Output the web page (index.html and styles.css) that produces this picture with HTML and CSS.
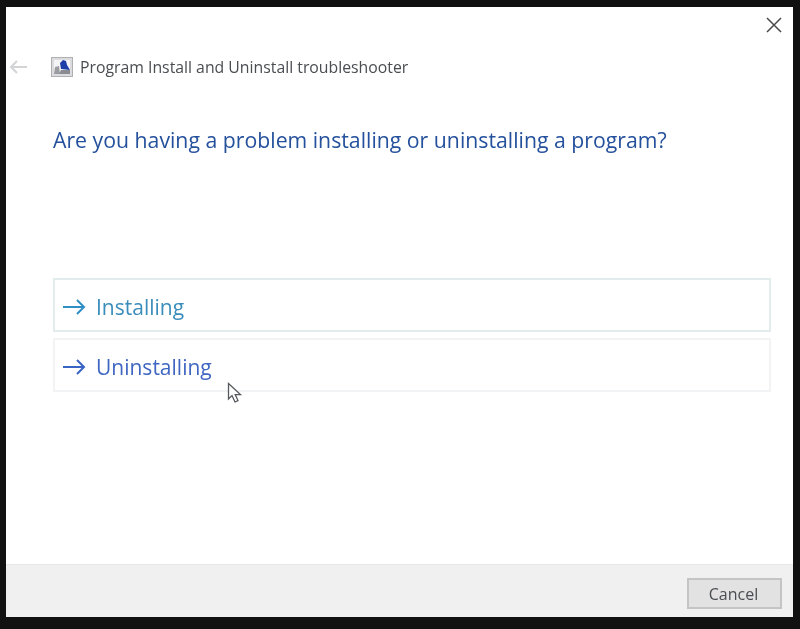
FILE: index.html
```html
<!DOCTYPE html>
<html>
<head>
  <link rel="stylesheet" href="styles.css">
</head>
<body>
  <div class="window">
    <div class="top-bar">
      <svg class="close-icon" width="16" height="16" viewBox="0 0 16 16">
        <path d="M1 1 L15 15 M15 1 L1 15" stroke="#4a4a4a" stroke-width="1.5" fill="none"/>
      </svg>
    </div>
    <div class="title-row">
      <svg class="back-icon" width="18" height="14" viewBox="0 0 18 14">
        <path d="M18 7 H2 M8 1 L2 7 L8 13" stroke="#d2d4d6" stroke-width="2" fill="none"/>
      </svg>
      <svg class="app-icon" width="22" height="20" viewBox="0 0 22 20">
        <rect x="0.5" y="0.5" width="21" height="19" fill="#dcdcde" stroke="#b0b0b2"/>
        <rect x="3" y="3" width="16" height="14" fill="#f4f4f6"/>
        <path d="M3 17 L4 10 L8 9 L9 17 Z" fill="#9a9ca2"/>
        <path d="M9 6 L12 3 L15 4 L16 8 L19 13 L10 12 Z" fill="#1f3fa8"/>
        <path d="M8 17 L10 13 L19 13 V17 Z" fill="#8a8c94"/>
      </svg>
      <span class="title-text">Program Install and Uninstall troubleshooter</span>
    </div>
    <h1 class="question">Are you having a problem installing or uninstalling a program?</h1>
    <div class="options">
      <div class="option option-first">
        <svg class="arrow" width="23" height="16" viewBox="0 0 23 16">
          <path d="M0 8 H21 M14 1 L21 8 L14 15" stroke="#2f8fc4" stroke-width="2" fill="none"/>
        </svg>
        <span class="option-label label-first">Installing</span>
      </div>
      <div class="option option-second">
        <svg class="arrow" width="23" height="16" viewBox="0 0 23 16">
          <path d="M0 8 H21 M14 1 L21 8 L14 15" stroke="#3a64c4" stroke-width="2" fill="none"/>
        </svg>
        <span class="option-label label-second">Uninstalling</span>
        <svg class="cursor" width="16" height="22" viewBox="0 0 16 22">
          <path d="M1.5 1.5 V17 L5 13.5 L8 20 L11 18.6 L8.2 12.6 H13.5 Z" fill="#fff" stroke="#55585c" stroke-width="1.3"/>
        </svg>
      </div>
    </div>
    <div class="footer">
      <button class="cancel-btn">Cancel</button>
    </div>
  </div>
</body>
</html>
```

FILE: styles.css
```css
body {
  margin: 0;
  width: 800px;
  height: 629px;
  overflow: hidden;
  background-color: #111;
  padding: 7px 7px 12px 6px;
  box-sizing: border-box;
  font-family: "Open Sans", "Noto Sans", sans-serif;
}

/* the reference is a soft video still */
.window {
  display: flex;
  flex-direction: column;
  height: 100%;
  background-color: #fff;
  filter: blur(0.4px);
}

.top-bar {
  display: flex;
  justify-content: flex-end;
  padding: 10px 11px 0 0;
  height: 26px;
  box-sizing: border-box;
}

.close-icon {
  display: block;
}

.title-row {
  display: flex;
  align-items: center;
  height: 20px;
  margin-top: 24px;
  padding-left: 3px;
}

.back-icon {
  margin-right: 24px;
}

.app-icon {
  margin-right: 7px;
}

.title-text {
  font-size: 15.8px;
  color: #4a4d52;
}

.question {
  margin: 48px 0 0 47px;
  font-size: 21.25px;
  font-weight: 400;
  line-height: 30px;
  color: #24509c;
}

.options {
  display: flex;
  flex-direction: column;
  gap: 6px;
  margin: 123px 22px 0 47px;
}

.option {
  position: relative;
  display: flex;
  align-items: center;
  height: 54px;
  box-sizing: border-box;
  padding: 4px 0 0 8px;
}

.option-first {
  border: 2px solid #e3eced;
}

.option-second {
  border: 2px solid #f1f3f4;
}

.arrow {
  margin-right: 10px;
}

.option-label {
  font-size: 21px;
}

.label-first {
  color: #3a8dbb;
}

.label-second {
  color: #3f66c2;
}

.cursor {
  position: absolute;
  left: 172px;
  top: 42px;
}

.footer {
  display: flex;
  justify-content: flex-end;
  align-items: flex-start;
  margin-top: auto;
  height: 53px;
  box-sizing: border-box;
  padding: 13px 11px 0 0;
  background-color: #f0f0f0;
  border-top: 1px solid #e8e8e8;
}

.cancel-btn {
  width: 95px;
  height: 31px;
  padding: 0 2px 0 0;
  background-color: #e2e2e2;
  border: 2px solid #c4c4c4;
  font-family: "Open Sans", "Noto Sans", sans-serif;
  font-size: 16px;
  color: #4a4d52;
}
```
